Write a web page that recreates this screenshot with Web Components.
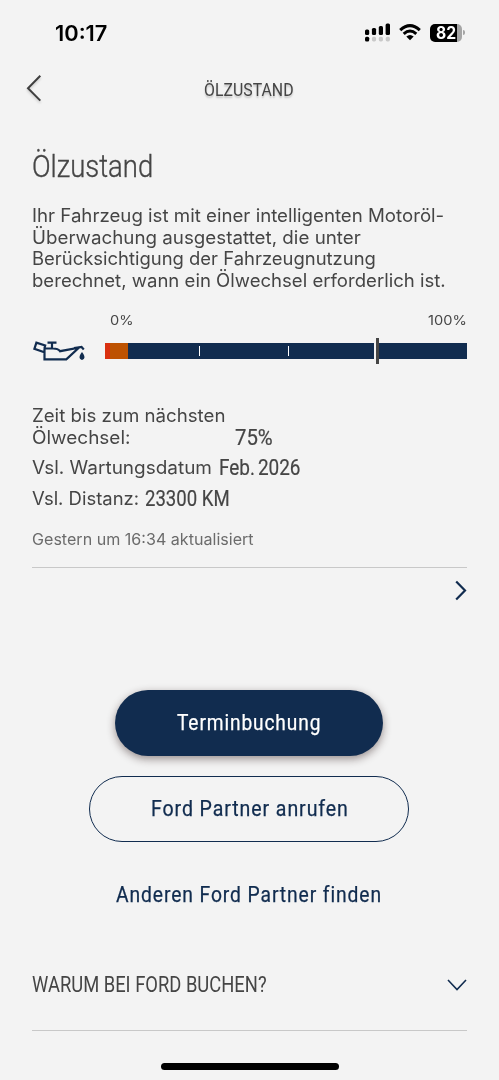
<!DOCTYPE html>
<html lang="de">
<head>
<meta charset="utf-8">
<title>Ölzustand</title>
<style>
html,body{margin:0;background:#f3f3f3}
body{font-family:Inter,"Liberation Sans",sans-serif;color:#454545}
</style>
</head>
<body>
<oil-screen></oil-screen>
<script>
// One line of text, condensed or widened to the width given in the attribute "w".
class FitText extends HTMLElement{
  connectedCallback(){
    const r=this.attachShadow({mode:'open'});
    r.innerHTML=`<style>:host{display:block;white-space:nowrap;flex:none}
      span{display:inline-block;transform-origin:0 50%;vertical-align:top}</style><span><slot></slot></span>`;
    const s=r.querySelector('span'), w=+this.getAttribute('w');
    this.style.width=w+'px';
    const fit=()=>{const ls=parseFloat(getComputedStyle(this).letterSpacing)||0;
      const n=s.offsetWidth-ls; if(n>0)s.style.transform=`scaleX(${w/n})`;};
    fit();
  }
}
customElements.define('fit-text',FitText);

const define=(name,html)=>customElements.define(name,class extends HTMLElement{
  connectedCallback(){this.attachShadow({mode:'open'}).innerHTML=html;}
});

define('status-bar',`<style>
:host{display:flex;height:60px;box-sizing:border-box;padding:21.4px 33.3px 0 55.4px;justify-content:space-between;color:#000}
fit-text{font:600 21px/26px Inter,sans-serif}
svg{display:block}
.icons{display:flex;align-items:flex-start;margin-top:2px}
.battery{display:grid;grid-template-columns:32px 4px;margin-left:9px;align-items:center}
.cell{height:18px;margin-top:.4px;border-radius:5px;background:linear-gradient(90deg,#000 26.7px,#a5a5a5 26.7px);color:#fff;box-sizing:border-box;padding-left:6px}
.cell fit-text{font:700 17px/18.5px Inter,sans-serif}
.cap{width:2px;height:5px;background:#a5a5a5;border-radius:0 3px 3px 0;margin-left:1px}
</style>
<fit-text w="52">10:17</fit-text>
<div class="icons">
<svg width="26" height="19" viewBox="0 0 26 19"><g fill="#000"><rect x="0" y="6.5" width="4.2" height="5.5" rx="1.5"/><rect x="6.9" y="5" width="4.2" height="7" rx="1.5"/><rect x="13.8" y="3" width="4.2" height="9" rx="1.5"/><rect x="20.6" y=".6" width="4.4" height="11.4" rx="1.5"/><rect x="0" y="13.8" width="4.2" height="4.6" rx="1.5"/></g><g fill="#c8c8c8"><rect x="6.9" y="13.8" width="4.2" height="4.6" rx="1.6"/><rect x="13.8" y="13.8" width="4.2" height="4.6" rx="1.6"/><rect x="20.7" y="13.8" width="4.2" height="4.6" rx="1.6"/></g></svg>
<svg style="margin-left:8px" width="22" height="19" viewBox="0 0 22 19"><path d="M1.2 7.2Q11-2 20.8 7.2M4.7 10.8q6.3-5.6 12.6 0" fill="none" stroke="#000" stroke-width="3"/><path d="M7.3 13.5q3.7-3 7.4 0L11 17.2z" fill="#000"/></svg>
<div class="battery"><div class="cell"><fit-text w="20.3">82</fit-text></div><div class="cap"></div></div>
</div>`);

define('nav-header',`<style>
:host{display:grid;grid-template-columns:94px 1fr 94px;height:60px;align-items:start}
svg{display:block;margin:12px 0 0 23.5px;filter:drop-shadow(0 2px 1px rgba(0,0,0,.15))}
fit-text{font:400 18.5px/20px Roboto,sans-serif;margin:19.7px 0 0 110px;text-shadow:0 2px 2px rgba(0,0,0,.2)}
</style>
<svg width="22" height="32" viewBox="0 0 22 32"><path d="M16.3 3.7 4 16.2 16.3 28.6" fill="none" stroke="#3f3f3f" stroke-width="2"/></svg>
<fit-text w="90">ÖLZUSTAND</fit-text>`);

define('oil-gauge',`<style>
:host{display:block;height:62px}
.labels{display:flex;justify-content:space-between;padding:0 .8px 0 77.8px;height:16px;font:400 13.3px/16px Inter,sans-serif}
.row{display:flex;margin-top:9.5px;height:27px;align-items:center}
.can{flex:none;width:73px}
svg{display:block}
.bar{flex:1;height:15.6px;display:flex;align-items:center;background:linear-gradient(90deg,#d9300f 5px,#bd5200 5px 23px,#112c4f 23px)}
.tick{flex:none;width:1.2px;height:10px;background:#fff}
.tick:nth-child(1){margin-left:93.6px}
.tick:nth-child(2){margin-left:88.3px}
.mark{flex:none;width:2.6px;height:26px;background:#454545;border-left:2.4px solid #f3f3f3;margin-left:84.8px}
</style>
<div class="labels"><fit-text w="23">0%</fit-text><fit-text w="38.5">100%</fit-text></div>
<div class="row"><div class="can"><svg width="54" height="22" viewBox="0 0 54 22"><g fill="none" stroke="#112c4f" stroke-width="2.2"><path d="M12.5 8.6V19.4H34.3L46.8 7.7 28 11.2Q26 8.5 21 8.5H12.3M12.3 12.3 2.4 8.8 4.4 2.6 13.2 5.5 12.4 8.5M15.5 2.7H24.5M20 2.7V8.5M42 8 49.5 6.9 51.8 9.4"/></g><path d="M50 12q3.6 4.4 2 6.8-2 2.2-4 0-1.6-2.4 2-6.8" fill="#112c4f"/></svg></div>
<div class="bar"><i class="tick"></i><i class="tick"></i><i class="mark"></i></div></div>`);

define('detail-list',`<style>
:host{display:block;font:400 18.3px/21.5px Inter,sans-serif}
.r{display:flex}
.v{font:400 21.4px/21.5px Roboto,sans-serif;-webkit-text-stroke:.2px #454545}
.b{margin-top:9.2px}
.u{font:400 15.7px/20px Inter,sans-serif;color:#6b6b6b;margin-top:20.3px}
</style>
<fit-text w="193">Zeit bis zum nächsten</fit-text>
<div class="r"><fit-text w="98.5">Ölwechsel:</fit-text><fit-text class="v" style="margin-left:104.5px" w="38">75%</fit-text></div>
<div class="r b"><fit-text w="180.5">Vsl. Wartungsdatum</fit-text><fit-text class="v" style="margin-left:6px;word-spacing:-2px" w="81.5">Feb. 2026</fit-text></div>
<div class="r b"><fit-text w="107">Vsl. Distanz:</fit-text><fit-text class="v" style="margin-left:5.5px" w="85">23300 KM</fit-text></div>
<fit-text class="u" w="221.5">Gestern um 16:34 aktualisiert</fit-text>`);

define('pill-button',`<style>
:host{display:flex;box-sizing:border-box;height:66px;border-radius:33px;align-items:center;justify-content:center;font:400 21.6px/24px Roboto,sans-serif;letter-spacing:1px;color:#112c4f;-webkit-text-stroke:.25px currentColor}
:host([kind=primary]){width:268px;background:#112c4f;color:#fff;box-shadow:0 3px 8px rgba(40,20,20,.45)}
:host([kind=outline]){width:320px;border:1.4px solid #112c4f}
</style><slot></slot>`);

define('accordion-row',`<style>
:host{display:flex;justify-content:space-between;align-items:center;height:90px;box-sizing:border-box;border-bottom:1.5px solid #c8c8c8;font:400 21.2px/24px Roboto,sans-serif}
svg{display:block}
</style><slot></slot><svg width="20" height="14" viewBox="0 0 20 14"><path d="M1 2 10 11.5 19 2" fill="none" stroke="#112c4f" stroke-width="1.6"/></svg>`);

define('oil-screen',`<style>
:host{display:block;width:499px;height:1080px;overflow:hidden;background:#f3f3f3}
main{padding:0 32px}
.title{font:300 31px/36px Roboto,sans-serif;margin-top:28.8px;-webkit-text-stroke:.35px #454545}
.text{margin-top:20.7px;font:400 18.3px/21.5px Inter,sans-serif}
oil-gauge{margin-top:20.7px}
detail-list{margin-top:31px}
.next{display:flex;justify-content:flex-end;border-top:1.5px solid #c8c8c8;margin-top:16.7px;height:123.2px;box-sizing:border-box}
.next svg{display:block;margin-top:11.2px}
.actions{display:flex;flex-direction:column;align-items:center;margin-right:1px}
pill-button+pill-button{margin-top:20.2px}
accordion-row{margin-top:12.6px}
.home{width:178px;height:6.4px;border-radius:4px;background:#000;margin:32.5px auto 0}
</style>
<status-bar></status-bar><nav-header></nav-header>
<main>
<fit-text class="title" w="121.5">Ölzustand</fit-text>
<div class="text"><fit-text w="412.5">Ihr Fahrzeug ist mit einer intelligenten Motoröl-</fit-text>
<fit-text w="328.5">Überwachung ausgestattet, die unter</fit-text>
<fit-text w="344">Berücksichtigung der Fahrzeugnutzung</fit-text>
<fit-text w="413.5">berechnet, wann ein Ölwechsel erforderlich ist.</fit-text></div>
<oil-gauge></oil-gauge>
<detail-list></detail-list>
<div class="next"><svg width="13" height="24" viewBox="0 0 13 24"><path d="M2.2 2.5 11 11.5 2.2 20.5" fill="none" stroke="#112c4f" stroke-width="2.2"/></svg></div>
<div class="actions">
<pill-button kind="primary"><fit-text w="143.5">Terminbuchung</fit-text></pill-button>
<pill-button kind="outline"><fit-text w="196.5">Ford Partner anrufen</fit-text></pill-button>
<pill-button kind="text"><fit-text w="265.5">Anderen Ford Partner finden</fit-text></pill-button>
</div>
<accordion-row><fit-text w="235">WARUM BEI FORD BUCHEN?</fit-text></accordion-row>
</main>
<div class="home"></div>`);
</script>
</body>
</html>
